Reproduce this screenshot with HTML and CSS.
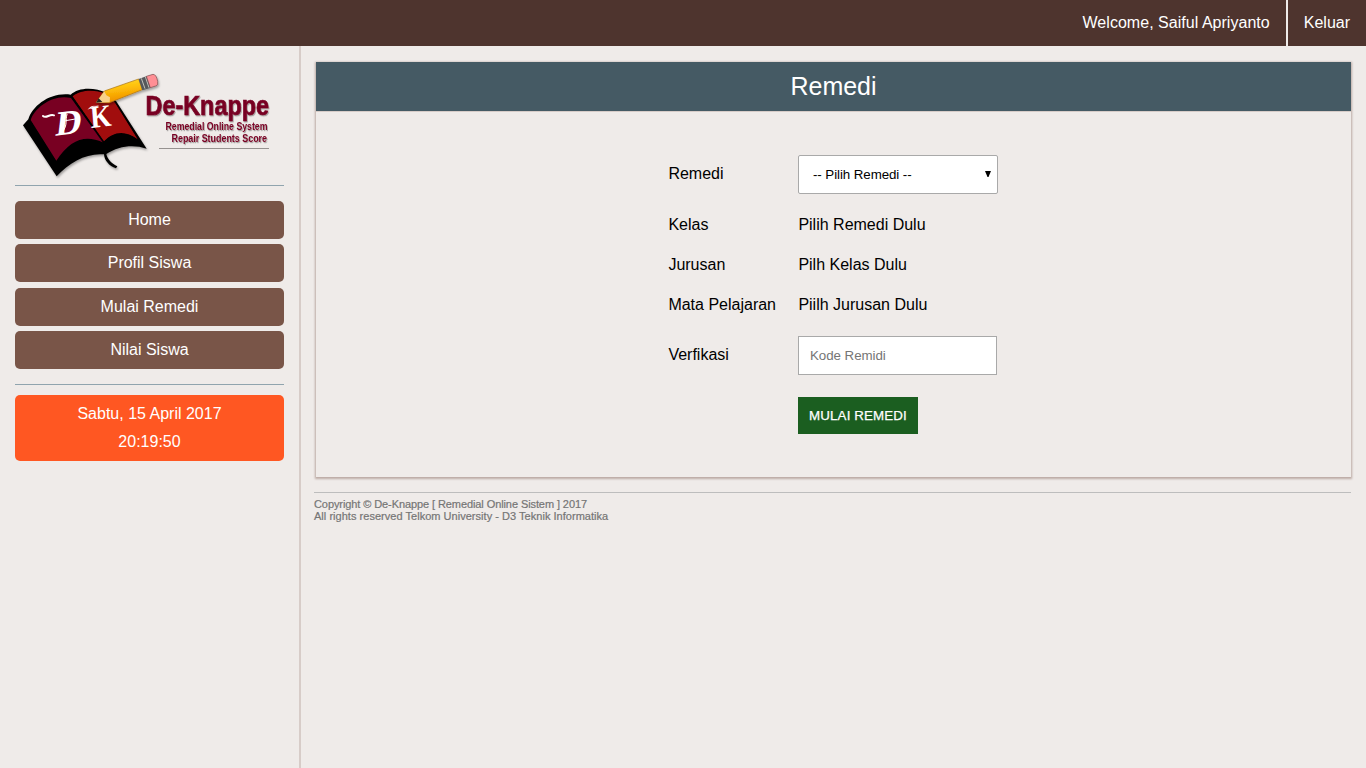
FILE: index.html
```html
<!DOCTYPE html>
<html lang="id">
<head>
<meta charset="utf-8">
<title>De-Knappe</title>
<link rel="stylesheet" href="styles.css">
</head>
<body>
<header class="topbar">
  <span class="welcome">Welcome, Saiful Apriyanto</span>
  <a class="logout">Keluar</a>
</header>
<div class="layout">
  <aside class="sidebar">
    <svg class="logo" viewBox="15 60 269 125" role="img" aria-label="De-Knappe">
      <defs>
        <linearGradient id="pencil" x1="0" y1="0" x2="0.25" y2="1">
          <stop offset="0" stop-color="#ffe03a"/><stop offset=".45" stop-color="#ffc20a"/><stop offset="1" stop-color="#f09000"/>
        </linearGradient>
        <filter id="soft" x="-10%" y="-10%" width="120%" height="125%">
          <feDropShadow dx="3" dy="5" stdDeviation="3" flood-color="#000" flood-opacity=".35"/>
        </filter>
        <filter id="textsoft" x="-5%" y="-10%" width="110%" height="130%">
          <feDropShadow dx=".8" dy="1.2" stdDeviation=".7" flood-color="#000" flood-opacity=".35"/>
        </filter>
      </defs>
      <g transform="translate(10 60) scale(.33333)">
        <g filter="url(#soft)">
          <path d="M39 196L55 178C68 137 120 96 182 104C205 82 250 80 292 99L318 123L410 266C370 252 325 258 289 282C292 298 306 311 322 319L318 325C297 318 283 301 282 283C230 278 178 307 140 349Z" fill="#000"/>
          <path d="M62 180C75 141 130 101 183 114L278 247C226 223 180 239 139 302Z" fill="#780024"/>
          <path d="M188 109C216 87 257 90 287 101L315 128L383 238C345 209 310 214 282 244Z" fill="#a10c10"/>
        </g>
        <text class="initial" transform="matrix(1.02 -.12 -.12 1 134 227)" font-size="106">D</text>
        <text class="initial" transform="matrix(.86 -.1 .08 1 243 204)" font-size="94">K</text>
        <g fill="none" stroke="#fff" stroke-linecap="round">
          <path d="M99 168C109 177 119 160 132 166" stroke-width="6"/>
          <path d="M171 163C165 181 174 195 158 214M167 182L196 177M236 147C246 134 254 142 264 138" stroke-width="3"/>
        </g>
        <g filter="url(#soft)">
          <path d="M259 127L283 93L386 57L397 89L298 128Z" fill="url(#pencil)" stroke="#a86f15" stroke-width="2"/>
          <path d="M258 128L283 94L289 106L300 112L299 127Z" fill="#f8d18b"/>
          <path d="M258 128L266 115L277 126Z" fill="#222"/>
          <path d="M386 57L411 48L423 83L397 91Z" fill="#55595b"/>
          <path d="M394 55L405 86M406 50L417 83" stroke="#c1c1bb" stroke-width="3"/>
          <path d="M409 49L429 43Q439 43 443 64Q446 77 437 78L421 83Z" fill="#ff8f95" stroke="#754c4d" stroke-width="2"/>
        </g>
      </g>
      <g class="logo-type" filter="url(#textsoft)">
        <text class="logo-name" x="145.5" y="115.3" textLength="123.500" lengthAdjust="spacingAndGlyphs">De-Knappe</text>
        <text class="logo-sub" x="165.5" y="129.5" textLength="102" lengthAdjust="spacingAndGlyphs">Remedial Online System</text>
        <text class="logo-sub" x="171.5" y="142" textLength="95.500" lengthAdjust="spacingAndGlyphs">Repair Students Score</text>
      </g>
      <path d="M159 148.500H269" stroke="#969290" stroke-width="1"/>
    </svg>
    <nav class="menu">
      <a>Home</a>
      <a>Profil Siswa</a>
      <a>Mulai Remedi</a>
      <a>Nilai Siswa</a>
    </nav>
    <div class="clock">Sabtu, 15 April 2017<br>20:19:50</div>
  </aside>
  <main class="content">
    <section class="card">
      <h1 class="card-title">Remedi</h1>
      <form class="form">
        <label>Remedi</label>
        <div class="select"><span>-- Pilih Remedi --</span><svg width="6" height="6" viewBox="0 0 6 6"><path d="M0 0H6L3.500 6H2.500Z"/></svg></div>
        <label>Kelas</label><span>Pilih Remedi Dulu</span>
        <label>Jurusan</label><span>Pilh Kelas Dulu</span>
        <label>Mata Pelajaran</label><span>Piilh Jurusan Dulu</span>
        <label>Verfikasi</label><input class="code" type="text" placeholder="Kode Remidi">
        <button class="submit" type="button">MULAI REMEDI</button>
      </form>
    </section>
    <footer class="footer">
      <div class="copyright">Copyright © De-Knappe [ Remedial Online Sistem ] 2017</div>
      <div class="rights">All rights reserved Telkom University - D3 Teknik Informatika</div>
    </footer>
  </main>
</div>
</body>
</html>
```

FILE: styles.css
```css
* { box-sizing: border-box; }
body {
  margin: 0;
  background: #efebe9;
  color: #000;
  font: 16px "Liberation Sans", Arial, sans-serif;
  overflow: hidden;
}
.topbar {
  display: flex;
  justify-content: flex-end;
  height: 46px;
  background: #4e342e;
  color: #fff;
  line-height: 45px;
}
.welcome { padding-right: 16px; letter-spacing: .03px; }
.logout { border-left: 2px solid #efebe9; padding: 0 16px; }
.layout { display: flex; height: 722px; }
.sidebar {
  width: 301px;
  flex: none;
  padding: 14px 15px 0;
  border-right: 2px solid #d7ccc8;
}
.logo { display: block; width: 269px; height: 125px; overflow: visible; }
.logo-type { fill: #780024; }
.logo-name { font: bold 27px "Liberation Sans", sans-serif; stroke: #780024; stroke-width: .7; }
.logo-sub { font: bold 10px "Liberation Sans", sans-serif; }
.initial {
  fill: #fff;
  font-family: "Liberation Serif", serif;
  font-weight: bold;
}
.menu {
  display: flex;
  flex-direction: column;
  gap: 5.4px;
  border: solid #90a4ae;
  border-width: 1px 0;
  padding: 15px 0;
}
.menu a {
  height: 38px;
  border-radius: 5px;
  background: #795548;
  color: #fff;
  text-align: center;
  line-height: 37px;
}
.clock {
  height: 66px;
  margin-top: 10px;
  padding-top: 5px;
  border-radius: 5px;
  background: #ff5722;
  color: #fff;
  text-align: center;
  line-height: 28px;
}
.content { flex: 1; padding: 16px 15px 0 13px; }
.card {
  height: 415px;
  margin-left: 2px;
  box-shadow: 0 1px 2px 1px #bcaaa4;
}
.card-title {
  height: 50px;
  margin: 0;
  border-bottom: 1px solid #d7ccc8;
  background: #455a64;
  color: #fff;
  font-size: 25px;
  font-weight: normal;
  line-height: 49px;
  text-align: center;
}
.form {
  display: grid;
  grid-template-columns: 130px 200px;
  grid-template-rows: 61px 40px 40px 40px 61px 59px;
  align-items: center;
  width: 330px;
  margin: 32px 0 0 352px;
}
.form label, .form > span { padding: 0 0 1px .4px; }
.select {
  display: flex;
  align-items: center;
  justify-content: space-between;
  height: 39px;
  padding: 0 6px 0 14px;
  border: 1px solid #a9a9a9;
  border-radius: 2px;
  background: #fff;
  font-size: 13.333px;
  letter-spacing: -.08px;
}
.select svg { margin-bottom: 2px; }
.code {
  width: 199px;
  height: 39px;
  padding: 0 11px;
  border: 1px solid #a9a9a9;
  font: 13.333px "Liberation Sans", Arial, sans-serif;
  letter-spacing: -.05px;
}
.code::placeholder { color: #757575; }
.submit {
  grid-column: 2;
  justify-self: start;
  width: 120px;
  height: 37px;
  padding: 0;
  border: 0;
  background: #1b5e20;
  color: #fff;
  font: 13.333px "Liberation Sans", Arial, sans-serif;
  letter-spacing: .13px;
  -webkit-text-stroke: .25px #fff;
}
.footer {
  width: 1037px;
  margin-top: 15px;
  padding-top: 5px;
  border-top: 1px solid #bdbdbd;
  color: #757575;
  font-size: 11px;
  line-height: 12px;
  -webkit-text-stroke: .2px #757575;
}
.copyright { letter-spacing: -.09px; }
.rights { letter-spacing: .03px; }
```
